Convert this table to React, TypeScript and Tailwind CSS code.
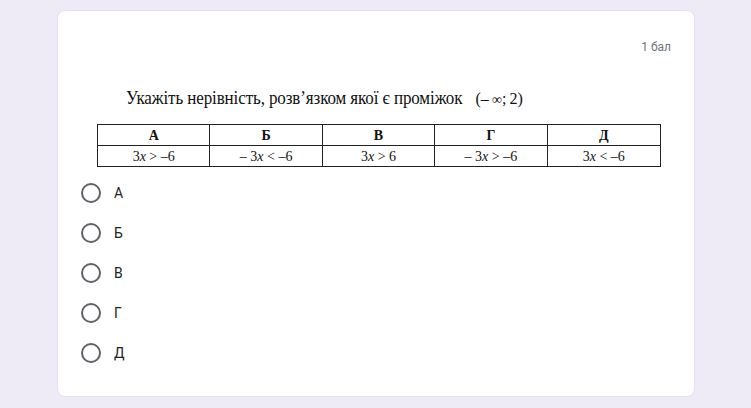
import React from 'react';

const cols = [
  { head: 'А', expr: <><span>3</span><i>x</i><span>&nbsp;&gt;&nbsp;–6</span></> },
  { head: 'Б', expr: <><span>–&nbsp;3</span><i>x</i><span>&nbsp;&lt;&nbsp;–6</span></> },
  { head: 'В', expr: <><span>3</span><i>x</i><span>&nbsp;&gt;&nbsp;6</span></> },
  { head: 'Г', expr: <><span>–&nbsp;3</span><i>x</i><span>&nbsp;&gt;&nbsp;–6</span></> },
  { head: 'Д', expr: <><span>3</span><i>x</i><span>&nbsp;&lt;&nbsp;–6</span></> },
];

const options = ['А', 'Б', 'В', 'Г', 'Д'];

export default function App() {
  return (
    <div className="w-[751px] h-[408px] bg-[#eeebf7] pt-[10px] pl-[57px]">
      {/* Question card */}
      <div className="w-[638px] h-[387px] bg-white rounded-lg border border-[#e3e1ec] flex flex-col">
        <div className="flex justify-end pr-[23px] pt-[28px] h-[48px]">
          <span className="text-[12px] leading-[16px] text-[#70757a] font-['Roboto',sans-serif]">1 бал</span>
        </div>

        {/* Question image */}
        <div className="pl-[67px] pt-[29px] font-['Liberation_Serif',serif] text-[#111]">
          <div className="flex items-center pl-[1px] h-[22px]">
            <span className="text-[17px] tracking-[-0.1px] scale-y-[1.05]">Укажіть нерівність, розв’язком якої є проміжок</span>
            <span className="ml-[13px] text-[16px]">(–&thinsp;<span className="text-[14px]">∞</span>;&thinsp;2)</span>
          </div>
          <div className="mt-[14px] -ml-[28px] w-[564px] border border-[#222] grid grid-cols-5 text-[14px]">
            {cols.map((c, i) => (
              <div key={c.head} className={`flex flex-col ${i < 4 ? 'border-r border-[#222]' : ''}`}>
                <div className="h-[21px] flex items-center justify-center font-bold border-b border-[#222]">{c.head}</div>
                <div className="h-[20px] flex items-center justify-center">{c.expr}</div>
              </div>
            ))}
          </div>
        </div>

        {/* Answer options */}
        <div className="pl-[23px] pt-[16px] flex flex-col gap-[20px] font-['Roboto',sans-serif]">
          {options.map((o) => (
            <label key={o} className="flex items-center h-[20px]">
              <span className="w-[20px] h-[20px] rounded-full border-2 border-[#5f6368]" />
              <span className="ml-[13px] text-[14px] text-[#202124]">{o}</span>
            </label>
          ))}
        </div>
      </div>
    </div>
  );
}
